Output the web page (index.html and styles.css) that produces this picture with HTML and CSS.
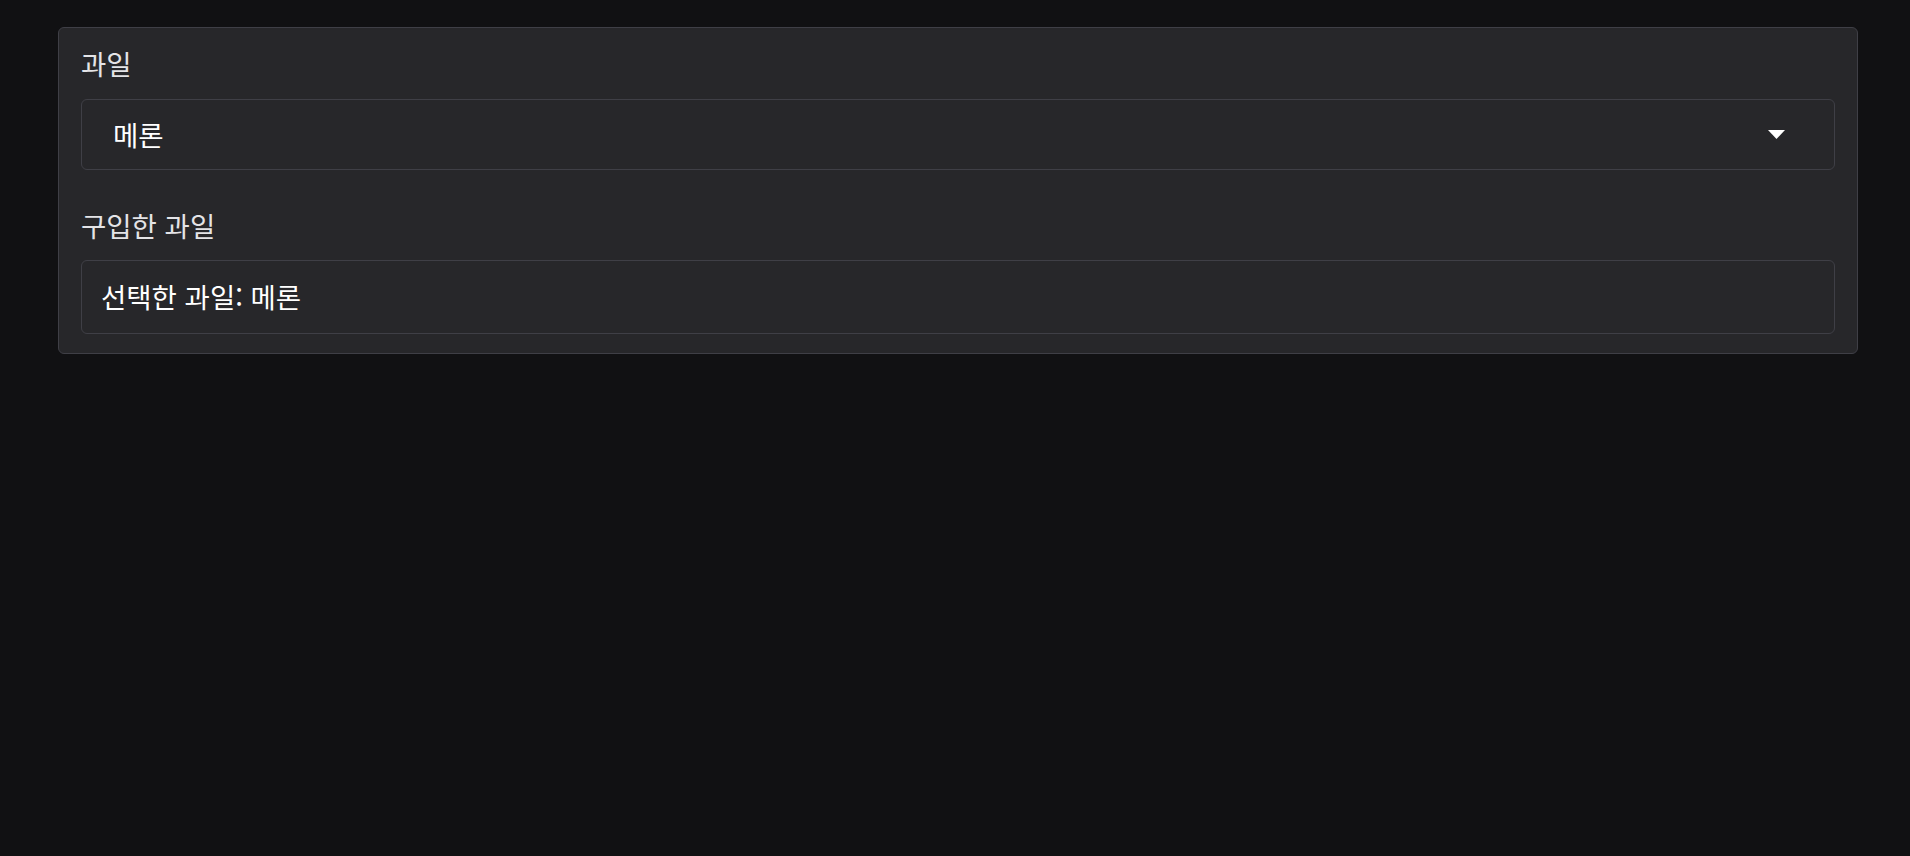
FILE: index.html
```html
<!DOCTYPE html>
<html lang="ko">
<head>
<meta charset="utf-8">
<title>과일</title>
<link rel="stylesheet" href="styles.css">
</head>
<body>
  <div class="card">
    <div class="label">과일</div>
    <div class="select">
      <span class="select-value">메론</span>
      <svg class="caret" width="17" height="9" viewBox="0 0 17 9"><polygon points="0,0 17,0 8.5,9" fill="#ffffff"/></svg>
    </div>
    <div class="label label-second">구입한 과일</div>
    <div class="output">선택한 과일: 메론</div>
  </div>
</body>
</html>
```
FILE: styles.css
```css
html, body {
  margin: 0;
  background: #111113;
}
body {
  padding: 27px 52px 0 58px;
  font-family: "Noto Sans CJK KR", "Noto Sans", sans-serif;
  font-size: 27.5px;
  line-height: 39px;
}
.card {
  background: #27272a;
  border: 1px solid #3f3f46;
  border-radius: 6px;
  padding: 16px 22px 19px 22px;
}
.label {
  color: #e4e4e7;
}
.label-second {
  margin-top: 36px;
}
.select {
  margin-top: 16px;
  display: flex;
  align-items: center;
  justify-content: space-between;
  border: 1px solid #3f3f46;
  border-radius: 6px;
  padding: 15px 49px 15px 31px;
  color: #ffffff;
}
.caret {
  display: block;
}
.output {
  margin-top: 15px;
  border: 1px solid #3f3f46;
  border-radius: 6px;
  padding: 16px 19px 17px 19px;
  color: #ffffff;
}
```
